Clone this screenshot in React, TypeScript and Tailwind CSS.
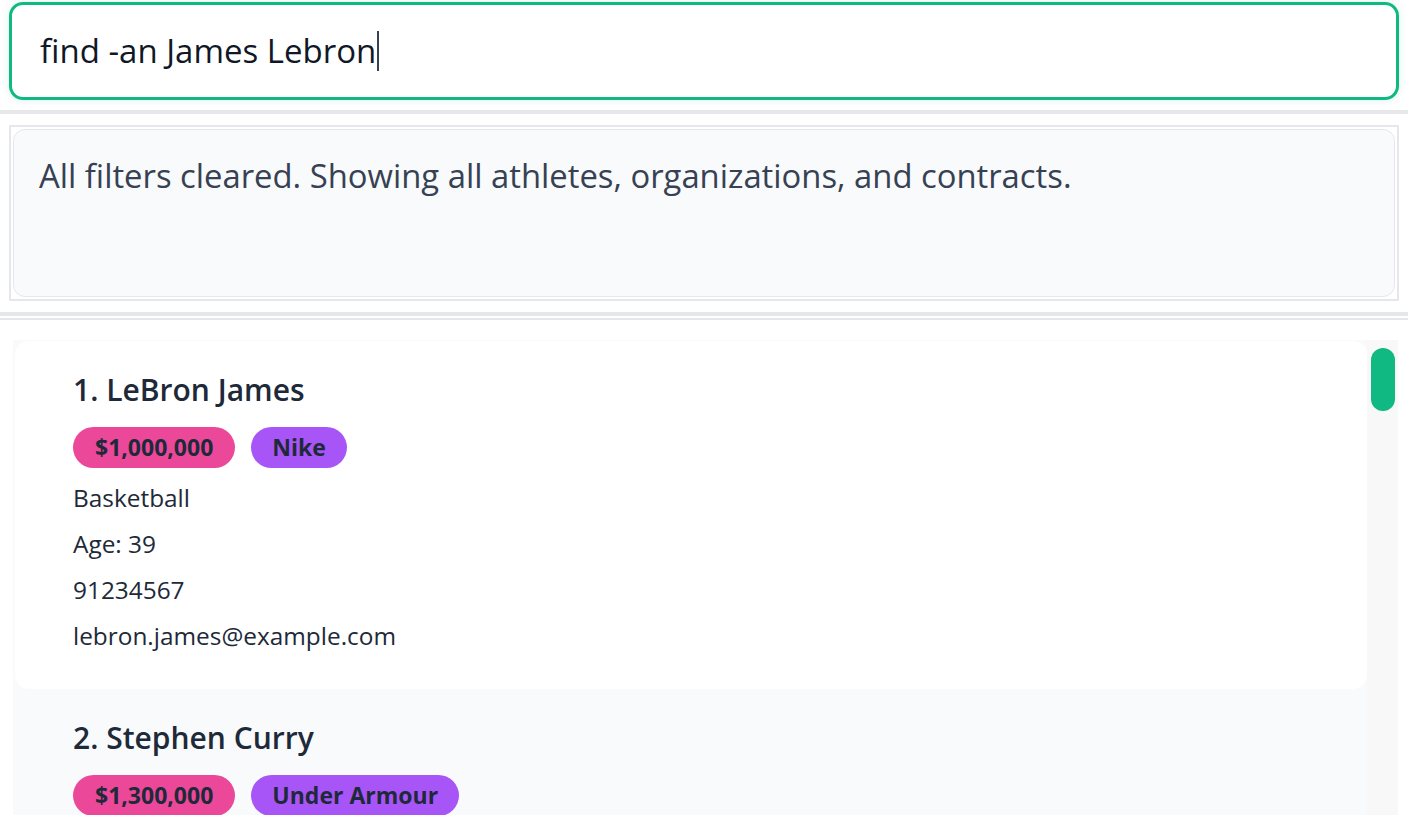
import React from "react";

type Athlete = {
  name: string;
  amount: string;
  org: string;
  sport: string;
  age: number;
  phone: string;
  email: string;
};

const athletes: Athlete[] = [
  { name: "LeBron James", amount: "$1,000,000", org: "Nike", sport: "Basketball", age: 39, phone: "91234567", email: "lebron.james@example.com" },
  { name: "Stephen Curry", amount: "$1,300,000", org: "Under Armour", sport: "Basketball", age: 36, phone: "98765432", email: "stephen.curry@example.com" },
];

function AthleteCard({ a, index, selected }: { a: Athlete; index: number; selected: boolean }) {
  return (
    <div className={`h-[348px] shrink-0 rounded-[14px] pl-[58px] pt-[29px] ${selected ? "bg-white" : ""}`}>
      <div className="text-[30px] font-semibold leading-[40px] text-gray-800">
        {index}. {a.name}
      </div>
      <div className="mt-[17px] flex gap-4">
        <span className="flex h-[41px] items-center rounded-full bg-[#ec4899] px-[22px] text-[23px] font-bold text-gray-800">{a.amount}</span>
        <span className="flex h-[41px] items-center rounded-full bg-[#a855f7] px-[21px] text-[23px] font-bold text-gray-800">{a.org}</span>
      </div>
      <div className="mt-[7px] flex flex-col text-[24.4px] leading-[46px] text-gray-800">
        <span>{a.sport}</span>
        <span>Age: {a.age}</span>
        <span>{a.phone}</span>
        <span>{a.email}</span>
      </div>
    </div>
  );
}

export default function App() {
  return (
    <main className="flex h-screen flex-col overflow-hidden bg-white font-['Open_Sans',sans-serif]">
      <div className="px-[9px] pt-[2px]">
        <div className="flex h-[98px] items-center rounded-[14px] border-[3px] border-[#10b981] pl-[28px] shadow-[0_0_8px_rgba(16,185,129,0.15)]">
          <span className="text-[33px] text-gray-900">find -an James Lebron</span>
          <span className="ml-[1px] h-[40px] w-[2px] bg-gray-700" />
        </div>
      </div>

      <div className="mt-[10px] h-[4px] bg-gray-200" />

      <div className="mx-[9px] mt-[11px] border-2 border-gray-200 p-[2px]">
        <div className="h-[168px] rounded-[12px] border border-gray-200 bg-gray-50 px-[25px] pt-[24px]">
          <p className="text-[32.8px] leading-[44px] text-gray-700">
            All filters cleared. Showing all athletes, organizations, and contracts.
          </p>
        </div>
      </div>

      <div className="mt-[11px] h-[4px] bg-gray-200" />
      <div className="mt-[2px] h-[2px] bg-gray-200" />

      <div className="ml-[13px] mr-[10px] mt-[20px] flex min-h-0 flex-1 bg-gray-50">
        <div className="flex min-w-0 flex-1 flex-col pl-[2px] pt-[1px]">
          {athletes.map((a, i) => (
            <AthleteCard key={a.name} a={a} index={i + 1} selected={i === 0} />
          ))}
        </div>
        <div className="w-[31px] shrink-0 bg-[#f8f8f8] pl-[4px] pt-[8px]">
          <div className="h-[63px] w-[24px] rounded-full bg-[#10b981]" />
        </div>
      </div>
    </main>
  );
}
